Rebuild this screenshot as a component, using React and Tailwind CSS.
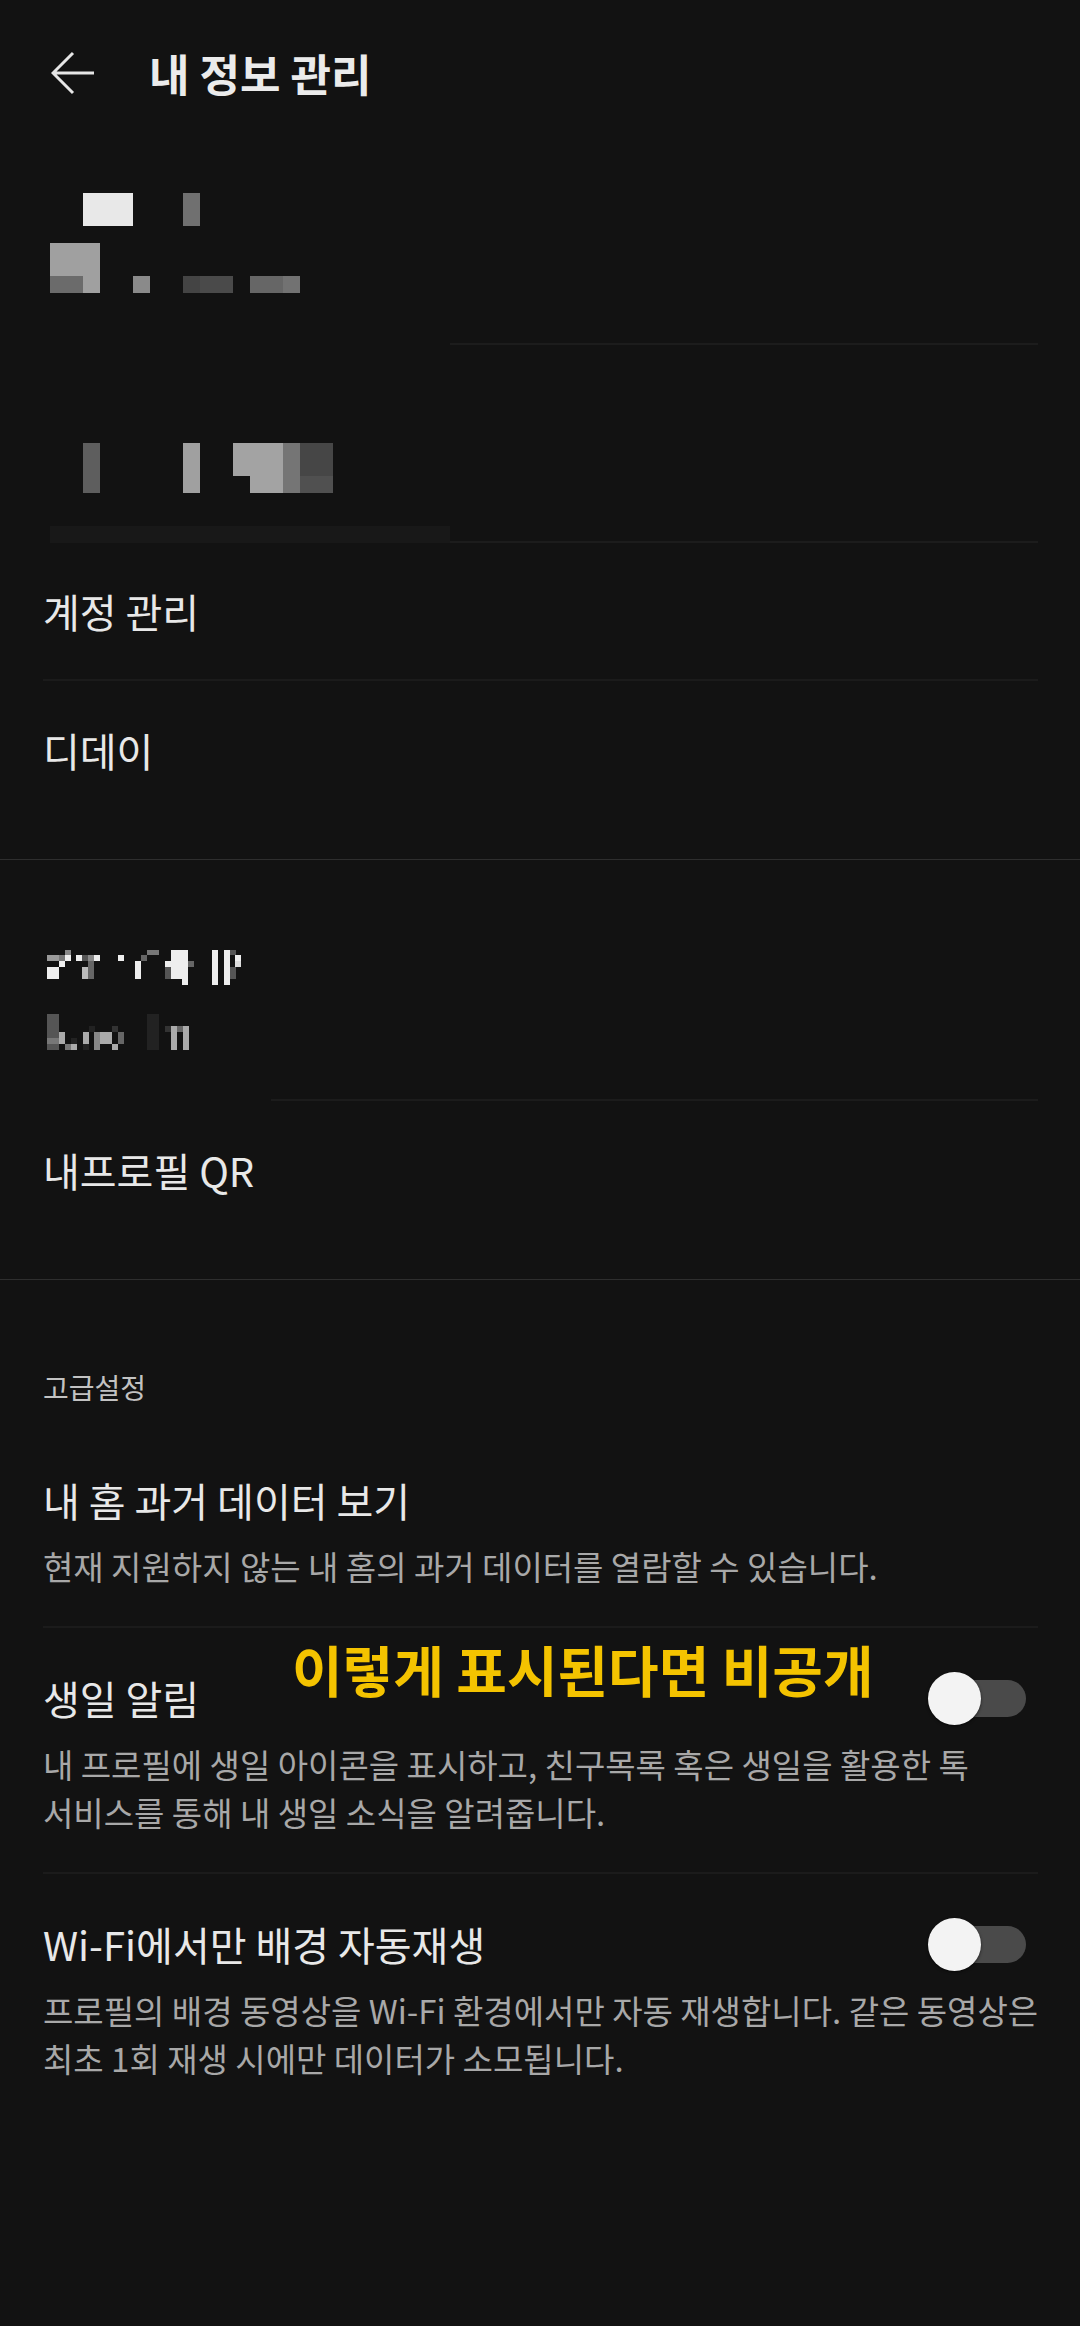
import React from 'react';

const mosaicA = [
  [33, 0, 50, 33, '#e8e8e8'],
  [133, 0, 17, 33, '#707070'],
  [0, 50, 50, 33, '#a0a0a0'],
  [33, 83, 17, 17, '#a0a0a0'],
  [0, 83, 33, 17, '#6b6b6b'],
  [83, 83, 17, 17, '#8a8a8a'],
  [133, 83, 17, 17, '#444444'],
  [150, 83, 33, 17, '#4a4a4a'],
  [200, 83, 33, 17, '#666666'],
  [233, 83, 17, 17, '#727272'],
];

const mosaicB = [
  [33, 0, 17, 50, '#5e5e5e'],
  [133, 0, 17, 50, '#a0a0a0'],
  [183, 0, 50, 33, '#a3a3a3'],
  [200, 33, 33, 17, '#a3a3a3'],
  [233, 0, 17, 50, '#757575'],
  [250, 0, 33, 33, '#464646'],
  [250, 33, 33, 17, '#505050'],
];

// blurred name / id, drawn on a 3x grid
const mosaicC = [
  [105, 60, 18, 15, '#888'], [51, 75, 36, 18, '#999'], [87, 75, 18, 18, '#777'], [105, 75, 18, 18, '#eee'],
  [87, 93, 18, 18, '#eee'], [51, 111, 36, 36, '#eee'],
  [137, 75, 18, 18, '#eee'], [155, 75, 18, 18, '#555'], [173, 75, 18, 18, '#888'], [191, 75, 18, 18, '#eee'],
  [155, 111, 18, 36, '#bbb'], [173, 93, 18, 54, '#666'],
  [265, 75, 18, 18, '#eee'], [315, 93, 18, 54, '#eee'],
  [333, 75, 18, 18, '#666'], [351, 60, 36, 15, '#777'],
  [405, 93, 18, 18, '#eee'], [405, 111, 18, 36, '#555'],
  [423, 60, 50, 87, '#eee'], [455, 147, 18, 18, '#eee'], [473, 93, 18, 18, '#666'],
  [545, 60, 18, 105, '#eee'], [581, 60, 18, 105, '#eee'],
  [599, 60, 18, 15, '#555'], [599, 111, 18, 36, '#555'],
  [615, 75, 18, 18, '#eee'], [615, 93, 18, 18, '#ddd'],
  [51, 252, 36, 72, '#555'], [51, 324, 36, 18, '#777'], [51, 342, 36, 18, '#555'],
  [87, 306, 18, 36, '#aaa'], [105, 342, 18, 18, '#777'], [123, 324, 18, 18, '#222'], [123, 342, 18, 18, '#aaa'],
  [159, 306, 18, 36, '#aaa'], [159, 342, 18, 18, '#222'], [177, 288, 18, 18, '#222'], [191, 306, 18, 54, '#888'],
  [209, 306, 36, 36, '#aaa'], [245, 288, 18, 18, '#333'], [245, 342, 18, 18, '#aaa'], [263, 306, 18, 36, '#666'],
  [351, 252, 36, 108, '#222'],
  [405, 288, 18, 18, '#333'], [423, 288, 18, 72, '#aaa'], [441, 288, 18, 18, '#666'], [459, 288, 18, 72, '#aaa'],
];

const Mosaic = ({ cells, width, height, viewBox }) => (
  <svg width={width} height={height} viewBox={viewBox} shapeRendering="crispEdges" className="block">
    {cells.map(([x, y, w, h, c], i) => (
      <rect key={i} x={x} y={y} width={w} height={h} fill={c} />
    ))}
  </svg>
);

const Toggle = () => (
  <div className="relative w-[98px] h-[53px] shrink-0 mr-[12px]">
    <div className="absolute left-[8px] right-0 top-[8px] h-[37px] rounded-full bg-[#4a4a4a]" />
    <div className="absolute left-0 top-0 w-[53px] h-[53px] rounded-full bg-[#f3f3f3] shadow-[0_1px_3px_rgba(0,0,0,0.6)]" />
  </div>
);

const SettingItem = ({ title, desc, toggle, last, children }) => (
  <div className={`relative pt-[46px] pb-[36px] ${last ? '' : 'border-b-2 border-[#1b1b1b]'}`}>
    <div className="flex items-center justify-between h-[48px]">
      <span className="text-[40px] leading-[48px] text-[#e8e8e8]">{title}</span>
      {toggle && <Toggle />}
    </div>
    <p className="mt-[18px] text-[33px] leading-[48px] text-[#a8a8a8] break-keep -mr-[4px]">{desc}</p>
    {children}
  </div>
);

export default function App() {
  return (
    <div className="w-[1080px] min-h-[2326px] bg-[#121212] font-['Noto_Sans_CJK_KR','Noto_Sans',sans-serif]">
      {/* header */}
      <div className="h-[146px] flex items-center">
        <svg width="44" height="44" viewBox="0 0 44 44" className="ml-[51px]" fill="none" stroke="#e6e6e6" strokeWidth="3">
          <path d="M2 22H43M22 2L2 22L22 42" />
        </svg>
        <h1 className="ml-[54px] text-[44px] font-bold text-[#ebebeb]">내 정보 관리</h1>
      </div>

      {/* profile */}
      <div>
        <div className="pt-[47px] pl-[50px] h-[197px]">
          <Mosaic cells={mosaicA} width={300} height={100} viewBox="0 0 300 100" />
        </div>
        <div className="ml-[450px] mr-[42px] h-[2px] bg-[#1c1c1c]" />
        <div className="pt-[98px] pl-[50px] h-[148px]">
          <Mosaic cells={mosaicB} width={300} height={50} viewBox="0 0 300 50" />
        </div>
        <div className="mt-[33px] ml-[50px] mr-[42px] flex items-end">
          <div className="w-[400px] h-[17px] bg-[#181818]" />
          <div className="flex-1 h-[2px] bg-[#1c1c1c]" />
        </div>
        <div className="ml-[43px] mr-[42px]">
          <div className="h-[138px] flex items-center border-b-2 border-[#1b1b1b] text-[40px] text-[#e8e8e8]">계정 관리</div>
          <div className="h-[138px] flex items-center text-[40px] text-[#e8e8e8]">디데이</div>
        </div>
        <div className="h-[40px]" />
      </div>
      <div className="h-px bg-[#2e2e2e]" />

      {/* QR */}
      <div>
        <div className="pt-[70px] pl-[30px] h-[239px]">
          <Mosaic cells={mosaicC} width={230} height={130} viewBox="0 0 690 390" />
        </div>
        <div className="ml-[271px] mr-[42px] h-[2px] bg-[#1c1c1c]" />
        <div className="ml-[43px] h-[138px] flex items-center text-[40px] text-[#e8e8e8]">내프로필 QR</div>
        <div className="h-[40px]" />
      </div>
      <div className="h-px bg-[#2e2e2e]" />

      {/* advanced */}
      <div className="pt-[89px] ml-[43px] mr-[42px]">
        <div className="text-[28px] leading-[36px] text-[#c2c2c2] mb-[25px]">고급설정</div>
        <SettingItem title="내 홈 과거 데이터 보기" desc="현재 지원하지 않는 내 홈의 과거 데이터를 열람할 수 있습니다." />
        <SettingItem
          title="생일 알림"
          toggle
          desc="내 프로필에 생일 아이콘을 표시하고, 친구목록 혹은 생일을 활용한 톡 서비스를 통해 내 생일 소식을 알려줍니다."
        >
          <div className="absolute left-[249px] top-[10px] text-[55px] leading-[60px] font-bold text-[#f4c300] whitespace-nowrap">
            이렇게 표시된다면 비공개
          </div>
        </SettingItem>
        <SettingItem
          title="Wi-Fi에서만 배경 자동재생"
          toggle
          last
          desc="프로필의 배경 동영상을 Wi-Fi 환경에서만 자동 재생합니다. 같은 동영상은 최초 1회 재생 시에만 데이터가 소모됩니다."
        />
      </div>
    </div>
  );
}
